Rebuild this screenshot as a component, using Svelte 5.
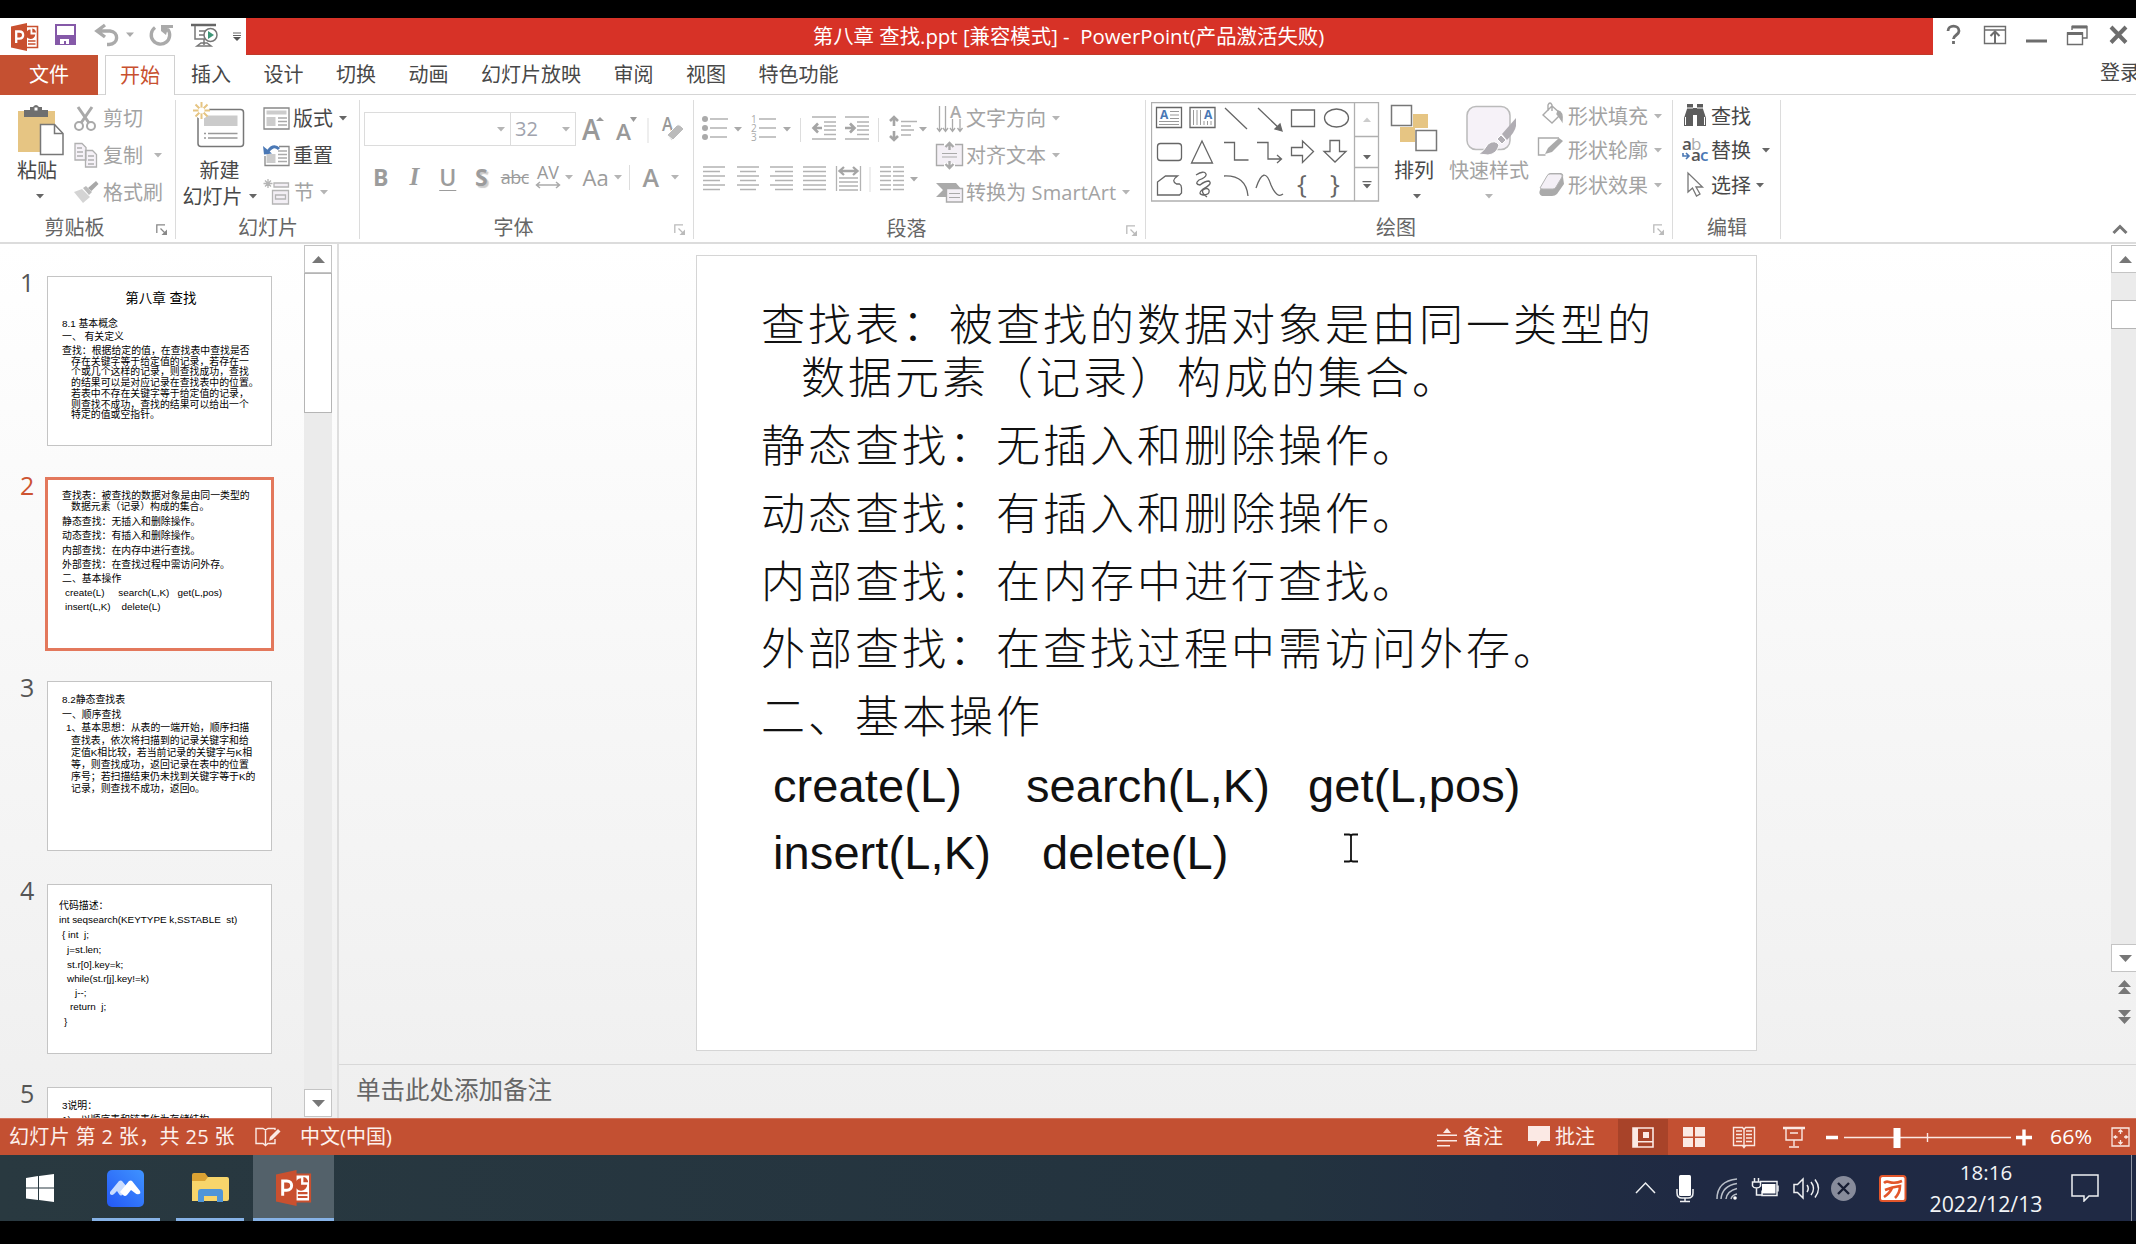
<script>
  const tabs = ['插入', '设计', '切换', '动画', '幻灯片放映', '审阅', '视图', '特色功能'];

  // Each line: [text, left offset, vertical centre] measured inside its slide.
  const slideLines = [
    ['查找表：被查找的数据对象是由同一类型的', 64, 66],
    ['数据元素（记录）构成的集合。', 104, 119],
    ['静态查找：无插入和删除操作。', 64, 187],
    ['动态查找：有插入和删除操作。', 64, 255],
    ['内部查找：在内存中进行查找。', 64, 323],
    ['外部查找：在查找过程中需访问外存。', 64, 390],
    ['二、基本操作', 64, 458],
  ];
  const slideCalls = [
    [['create(L)', 76], ['search(L,K)', 329], ['get(L,pos)', 611]],
    [['insert(L,K)', 76], ['delete(L)', 345]],
  ];

  const thumbs = [
    {
      n: 1,
      title: '第八章 查找',
      lines: [
        ['8.1 基本概念', 14, 46],
        ['一、 有关定义', 14, 59],
        ['查找：根据给定的值，在查找表中查找是否', 14, 73],
        ['存在关键字等于给定值的记录，若存在一', 23, 84],
        ['个或几个这样的记录，则查找成功，查找', 23, 94],
        ['的结果可以是对应记录在查找表中的位置。', 23, 104.5],
        ['若表中不存在关键字等于给定值的记录，', 23, 115.5],
        ['则查找不成功，查找的结果可以给出一个', 23, 126.5],
        ['特定的值或空指针。', 23, 137],
      ],
    },
    {
      n: 2,
      selected: true,
      lines: [
        ['查找表：被查找的数据对象是由同一类型的', 14, 15],
        ['数据元素（记录）构成的集合。', 23, 26.5],
        ['静态查找：无插入和删除操作。', 14, 41],
        ['动态查找：有插入和删除操作。', 14, 55.5],
        ['内部查找：在内存中进行查找。', 14, 70],
        ['外部查找：在查找过程中需访问外存。', 14, 84.5],
        ['二、基本操作', 14, 98],
        ['create(L)     search(L,K)   get(L,pos)', 17, 112],
        ['insert(L,K)    delete(L)', 17, 126.5],
      ],
    },
    {
      n: 3,
      lines: [
        ['8.2静态查找表', 14, 17],
        ['一、顺序查找', 14, 31.5],
        ['1、基本思想：从表的一端开始，顺序扫描', 18, 45],
        ['查找表，依次将扫描到的记录关键字和给', 23, 57.5],
        ['定值K相比较，若当前记录的关键字与K相', 23, 70],
        ['等，则查找成功，返回记录在表中的位置', 23, 82],
        ['序号；若扫描结束仍未找到关键字等于K的', 23, 94],
        ['记录，则查找不成功，返回0。', 23, 106],
      ],
    },
    {
      n: 4,
      lines: [
        ['代码描述：', 11, 20],
        ['int seqsearch(KEYTYPE k,SSTABLE  st)', 11, 33.5],
        ['{ int  j;', 14, 48.5],
        ['j=st.len;', 19, 64],
        ['st.r[0].key=k;', 19, 79],
        ['while(st.r[j].key!=k)', 19, 93],
        ['j--;', 27, 107],
        ['return  j;', 22, 121],
        ['}', 16, 135.5],
      ],
    },
    { n: 5, lines: [['3说明：', 14, 17], ['1)、以顺序表和链表作为存储结构', 14, 31]] },
  ];

  const gap = (lines, i, h) => lines[i][2] - (i ? lines[i - 1][2] + h / 2 : 0) - h / 2;
</script>

{#snippet caret(dim = false)}
  <svg class="caret" class:dim width="8" height="5" viewBox="0 0 8 5"><path d="M0 0h8L4 4.6z" /></svg>
{/snippet}

{#snippet launcher(dim = false)}
  <svg class="launcher" class:dim width="12" height="12" viewBox="0 0 12 12">
    <path d="M.8 9V.8H9M4.5 4.5 9 9" fill="none" stroke="currentColor" stroke-width="1.3" />
    <path d="M11 5.5V11H5.5z" fill="currentColor" />
  </svg>
{/snippet}

{#snippet pptLogo(w, h)}
  <svg width={w} height={h} viewBox="0 0 28 28">
    <path d="M14 3.5h12.500v21H14z" fill="#fff" stroke="#c9502f" stroke-width="1.6" />
    <path d="M19.500 6.500v5h4.800a4.800 4.800 0 1 1-4.800-5z" fill="#c9502f" />
    <path d="M21.300 5.500a4.500 4.500 0 0 1 3.700 4h-3.700z" fill="#c9502f" />
    <path d="M17 18h7.500M17 21h7.500" stroke="#c9502f" stroke-width="1.6" />
    <path d="M0 3.500 16 0v28L0 24.500z" fill="#c9502f" />
    <path d="M5.200 20V8.500h3.200c5 0 5 7.200 0 7.200H5.200" fill="none" stroke="#fff" stroke-width="2.300" />
  </svg>
{/snippet}

<div class="screen">
  <header class="titlebar">
    <div class="quick">
      <span class="q1">{@render pptLogo(28, 28)}</span>
      <svg width="182" height="37" viewBox="50 18 182 37" fill="none">
        <path d="M56 25h19v19H56z" stroke="#8559a8" stroke-width="2" />
        <path d="M56 35h19v9H56z" fill="#8559a8" /><path d="M60 39h9v5h-3v-3h-2v3h-4z" fill="#fff" />
        <path d="M97 31h13c9 1 9 13-1 13.500h-2M105 25l-8 6 8 6" stroke="#aaa" stroke-width="3.4" />
        <path d="M126 32.500h8l-4 4.500z" fill="#aaa" />
        <path d="M155 27.500a9.200 9.200 0 1 0 12.500 1.500" stroke="#aaa" stroke-width="3.400" /><path d="M161 25h12v3h-5l-2 7-5-4z" fill="#aaa" />
        <path d="M191 25h25" stroke="#666" stroke-width="2.500" /><path d="M195 26v13h10M199 31h8M199 35h5M204 39v6M197 46l4-3h6l4 3z" stroke="#777" stroke-width="1.500" />
        <circle cx="210.500" cy="35" r="6.500" fill="#fff" stroke="#777" stroke-width="1.500" /><path d="M208 31v8l6-4z" fill="#3f9677" />
      </svg>
      <svg width="10" height="10" viewBox="0 0 10 10"><path d="M1 1h8M1 3.500h8" stroke="#666" stroke-width="1" /><path d="M1 5h8L5 9z" fill="#555" /></svg>
    </div>
    <div class="title">第八章 查找.ppt [兼容模式] -&nbsp; PowerPoint(产品激活失败)</div>
    <div class="winctl">
      <svg width="203" height="37" viewBox="1933 18 203 37" fill="none" stroke="#6d6d6d" stroke-width="1.400">
        <path d="M1948 31c0-6.500 11-6.500 11 0 0 4-5.500 4-5.500 8M1953.500 41v3" stroke-width="2.800" />
        <path d="M1984.500 26.500h21v17h-21zM1984.500 30h21" /><path d="M1995 43V32M1990.500 36l4.500-4.500 4.500 4.500" stroke-width="2" />
        <path d="M2026 41h21" stroke-width="3" />
        <path d="M2072 30v-3.500h15V38h-4" /><path d="M2072 27h15" stroke-width="3" /><path d="M2067.500 33h15v11.500h-15z" /><path d="M2067 33.500h16" stroke-width="3" />
        <path d="m2111 27 15 15.500M2126 27l-15 15.500" stroke-width="4" />
      </svg>
    </div>
  </header>

  <nav class="tabs">
    <div class="file">文件</div>
    <div class="tab active">开始</div>
    <div class="others">
      {#each tabs as t}<span>{t}</span>{/each}
    </div>
    <span class="login">登录</span>
  </nav>

  <section class="ribbon">
    <div class="group clip">
      <div class="body">
        <div class="big">
          <svg width="74" height="63" viewBox="0 95 74 63">
            <path d="M18 111h37v41H18z" fill="#e6c583" /><path d="M24 110h6v-3h3q3-4 6 0h3v3h6v7H24z" fill="#6f6f6f" /><path d="M34.500 107.500h3v3h-3z" fill="#fff" />
            <path d="M40.500 124.500h14l8.500 9v21H40.500z" fill="#fff" stroke="#777" stroke-width="1.500" /><path d="M54.500 124.500v9H63" fill="none" stroke="#777" stroke-width="1.500" />
          </svg>
          <span>粘贴</span>
          <span class="drop">{@render caret()}</span>
        </div>
        <div class="rows">
          <div class="row dim">
            <svg width="29" height="36" viewBox="74 100 29 36" fill="none" stroke="#a9a9a9" stroke-width="2"><circle cx="79" cy="125" r="4" /><circle cx="91" cy="125" r="4" /><path d="m78 106 11 16M92 106l-11 16" stroke-width="3" /></svg>
            剪切
          </div>
          <div class="row dim">
            <svg width="29" height="36" viewBox="74 137 29 36" fill="#f6f2f8" stroke="#b0b0b0" stroke-width="1.300"><path d="M75 142.500h7l4 4V159H75zM85.500 149.500h7l4 4V166h-11z" /><path d="M77 147h5M77 151h6M77 155h6M88 155h6M88 159h6M88 163h6" /></svg>
            复制<span class="c1">{@render caret(true)}</span>
          </div>
          <div class="row dim">
            <svg width="29" height="36" viewBox="74 174 29 36"><path d="m74 191 8-3 8 8-7 6z" fill="#d4d4d4" /><path d="m83 187 3-2 6 6-3 3z" fill="#bbb" /><path d="m88 187 8-7 2.500 3-7 7z" fill="#a8a8a8" /></svg>
            格式刷
          </div>
        </div>
      </div>
      <footer class="wide"><span class="label">剪贴板</span>{@render launcher()}</footer>
    </div>

    <div class="group slides">
      <div class="body">
        <div class="big">
          <svg width="80" height="63" viewBox="176 95 80 63" fill="none">
            <rect x="198" y="109.500" width="45.500" height="37" rx="3" stroke="#777" stroke-width="1.500" fill="#fff" /><path d="M204 115.500h33.500v10.500H204z" fill="#cbcbcb" />
            <path d="M208 133.500h29.500M208 138h29.500M204 133.500h2M204 138h2" stroke="#999" stroke-width="1.300" />
            <circle cx="201.500" cy="110.500" r="8" fill="#fff" /><path d="M201.500 102v17M193 110.500h17M195.500 104.500l12 12M207.500 104.500l-12 12" stroke="#e6c583" stroke-width="2" /><circle cx="201.500" cy="110.500" r="3" fill="#fff" />
          </svg>
          <span>新建</span>
          <span class="two">幻灯片{@render caret()}</span>
        </div>
        <div class="rows">
          <div class="row">
            <svg width="30" height="36" viewBox="263 100 30 36" fill="none" stroke="#888" stroke-width="1.300"><path d="M264 107h25v21h-25z" /><path d="M266.500 109.500h20v4h-20zM266.500 116h9v9h-9z" fill="#ccc" stroke="none" /><path d="M278 117h9M278 120.500h9M278 124h9" stroke="#aaa" /></svg>
            版式<span class="c2">{@render caret()}</span>
          </div>
          <div class="row">
            <svg width="30" height="36" viewBox="263 137 30 36" fill="none" stroke="#888" stroke-width="1.300"><path d="M279 145.500h10v19h-24V155" /><path d="M266.500 153h9v9h-9z" fill="#ccc" stroke="none" /><path d="M278 150h9M278 153.500h9M278 157h9M278 160.500h9" stroke="#aaa" /><path d="M279 148q-6-6-12 4" stroke="#4a78b5" stroke-width="3" /><path d="m263 145 1 8.500 8-1z" fill="#4a78b5" stroke="none" /></svg>
            重置
          </div>
          <div class="row dim">
            <svg width="31" height="36" viewBox="263 174 31 36" fill="#f3eff5" stroke="#b5b5b5" stroke-width="1.300"><path d="M268 178v9M263.500 182.500h9M265 179.500l6 6M271 179.500l-6 6" /><path d="M274 182h14.500v4H274zM272.500 189.500h16V203h-16zM275.500 194h10v4h-10z" /></svg>
            节<span class="c2">{@render caret(true)}</span>
          </div>
        </div>
      </div>
      <footer><span class="label">幻灯片</span></footer>
    </div>

    <div class="group font">
      <div class="body col">
        <div class="frow">
          <div class="box b1">{@render caret(true)}</div>
          <div class="box b2"><span>32</span>{@render caret(true)}</div>
          <svg width="112" height="36" viewBox="576 111 112 36" fill="#999">
            <text x="582" y="140" font-size="28" font-weight="600" textLength="18" lengthAdjust="spacingAndGlyphs">A</text><path d="m596 121 4-4 4 4z" />
            <text x="616" y="140" font-size="22" font-weight="600" textLength="15" lengthAdjust="spacingAndGlyphs">A</text><path d="m630 117 7 0-3.500 5z" />
            <path d="M647.500 118h1v25h-1z" fill="#ddd" />
            <text x="662" y="131" font-size="19" font-weight="600" textLength="11" lengthAdjust="spacingAndGlyphs">A</text><path d="m667 135 10-10q2-1 4 1l3 3-12 12z" fill="#bbb" stroke="#fff" /><path d="m668 136 5 4" stroke="#fff" />
          </svg>
        </div>
        <div class="frow fmt">
          <b>B</b><i>I</i><u>U</u><strong>S</strong><s>abc</s>
          <span class="av"><svg width="26" height="28" viewBox="536 165 26 28"><text x="538" y="181" font-size="19" fill="#999" textLength="22" lengthAdjust="spacingAndGlyphs">AV</text><path d="M538 187h22M541 184l-3.500 3 3.500 3M557 184l3.500 3-3.500 3" fill="none" stroke="#aaa" stroke-width="1.500" /></svg>{@render caret(true)}</span>
          <span class="aa">Aa{@render caret(true)}</span>
          <span class="sep"></span>
          <span class="fa">A{@render caret(true)}</span>
        </div>
      </div>
      <footer class="wide"><span class="label">字体</span>{@render launcher(true)}</footer>
    </div>

    <div class="group para">
      <div class="body">
        <svg width="241" height="120" viewBox="694 95 241 120" fill="none" stroke="#b3b3b3" stroke-width="1.700">
          <g fill="#aaa" stroke="none"><circle cx="705" cy="119" r="3" /><circle cx="705" cy="128" r="3" /><circle cx="705" cy="137" r="3" />
            <path d="M734 127h8l-4 4.600zM783 127h8l-4 4.600zM919 127h8l-4 4.600zM910 177h8l-4 4.600z" />
            <text x="751" y="123" font-size="10">1</text><text x="751" y="132" font-size="10">2</text><text x="751" y="141" font-size="10">3</text></g>
          <path d="M710 119h18M710 128h17M710 137h17M759 119h17M759 128h17M759 137h17" />
          <path d="M800.500 118v24M878.500 118v24M870 167v25" stroke="#ddd" stroke-width="1" />
          <path d="M812 117h24M824 122h12M824 126h12M824 130h12M824 134.500h12M812 139h24M845 117h24M857 122h12M857 126h12M857 130h12M857 134.500h12M845 139h24" stroke-width="1.400" />
          <path d="M813 128h9M818 123.500l-4.500 4.500 4.500 4.500M845 128h9M850 123.500l4.500 4.500-4.500 4.500M894 118v8M890 121l4-4 4 4M894 131v8M890 136l4 4 4-4" stroke="#a5a5a5" stroke-width="2.600" />
          <path d="M901 121.500h16M901 126h10M901 130h13M901 135h10" />
          <path d="M703 167h22M703 171.500h17M703 176h22M703 180.500h17M703 185h22M703 189.500h17M737 167h22M740 171.500h16M737 176h22M740 180.500h16M737 185h22M740 189.500h16M770 167h23M775 171.500h18M770 176h23M775 180.500h18M770 185h23M775 189.500h18M803 167h23M803 171.500h23M803 176h23M803 180.500h23M803 185h23M803 189.500h23" stroke-width="1.300" />
          <path d="M836.500 166v25M860.500 166v25M839 178h19M839 182h19M839 186h19M839 190h19" stroke-width="1.300" /><path d="M840 171h17M844 167l-4.500 4 4.500 4M853 167l4.500 4-4.500 4" stroke="#a5a5a5" stroke-width="2.300" />
          <path d="M880 167h11M880 171.500h11M880 176h11M880 180.500h11M880 185h11M880 189.500h11M893 167h11M893 171.500h11M893 176h11M893 180.500h11M893 185h11M893 189.500h11" stroke-width="1.300" />
        </svg>
        <div class="rows">
          <div class="row dim">
            <svg width="31" height="36" viewBox="935 100 31 36" fill="none" stroke="#aaa" stroke-width="1.300"><path d="M939.500 105v25M945.500 105v25M952.500 118v12M960 118v12M937 127l2.500 3.500 2.500-3.500M943 127l2.500 3.500 2.500-3.500M950 127l2.500 3.500 2.500-3.500M957.500 127l2.500 3.500 2.500-3.500" /><text x="950" y="117" font-size="17" font-weight="600" fill="#aaa" stroke="none">A</text></svg>
            文字方向<span class="c3">{@render caret(true)}</span>
          </div>
          <div class="row dim">
            <svg width="31" height="36" viewBox="935 137 31 36" fill="none" stroke="#aaa" stroke-width="1.400"><path d="M936.500 143.500h26v21h-26z" fill="#f4f0f6" /><path d="M944 141h11v4h-11zM944 162h11v4h-11z" fill="#fff" stroke="none" /><path d="M942 152.500h15M942 156h15" stroke-width="1" /><path d="M949.500 142v7M945.500 146l4-4 4 4M949.500 160v7M945.500 163l4 4 4-4" stroke-width="2.400" /></svg>
            对齐文本<span class="c3">{@render caret(true)}</span>
          </div>
          <div class="row dim">
            <svg width="31" height="36" viewBox="935 174 31 36"><path d="M936 182h20l6 7-6 7h-20l7-7z" fill="#aaa" /><path d="M946.500 187.500h16V201h-16z" fill="#f4f0f6" stroke="#aaa" stroke-width="1.400" /><path d="M949 192.500h11M949 196.500h11" stroke="#aaa" stroke-width="1.200" /></svg>
            <span class="smart">转换为 SmartArt</span><span class="c3">{@render caret(true)}</span>
          </div>
        </div>
      </div>
      <footer class="wide"><span class="label">段落</span>{@render launcher(true)}</footer>
    </div>

    <div class="group draw">
      <div class="body">
        <svg class="gallery" width="229" height="100" viewBox="1151 102 229 100" fill="none" stroke="#666" stroke-width="1.300">
          <path d="M1151.500 102.500h227v98.500h-227zM1354.500 102.500V201M1354.500 136.500h24M1354.500 167.500h24" stroke="#b0b0b0" />
          <path d="M1156.500 107.500h25v20h-25zM1190 107.500h25v20h-25z" />
          <path d="M1170 111.500h9M1170 115h9M1170 118.500h9M1159 121.500h20M1159 124.500h20M1193.500 110v15M1197 110v15M1200.500 110v15M1204 121v4M1207.500 121v4M1211 121v4" stroke="#999" stroke-width="1" />
          <g fill="#4a78b5" stroke="none" font-weight="700" font-size="12"><text x="1160" y="119">A</text><text x="1204" y="119">A</text></g>
          <path d="m1225 108 22 21M1258 108l23 22" /><path d="m1282 131-7-2 5-5z" fill="#666" />
          <path d="M1291.500 110h23v16.500h-23z" /><ellipse cx="1336.500" cy="118" rx="12" ry="9" />
          <rect x="1157.500" y="143.500" width="24" height="17" rx="3" /><path d="M1202 141l10.500 22h-21zM1224 142.500h10.500V160h14M1257 142.500h11V159h13M1277 155l4.500 4-4.500 4M1291.500 147.500h11v-6.500l11 10.500-11 11v-7h-11zM1330 140.500h9.500v11h6.500l-11 10.500-11-10.500h6z" />
          <path d="M1157.500 182l8-6h12q-7 5-1 8h3q2 1 2 4v5l-2 2h-22zM1196 175q8-5 10-1 1 3-7 6-5 4 1 5 5-4 9-4 4 3-6 8-6 5 0 6 7 0 6-5-2-3-6 0-2 3 4 7M1224 176q22-1 24 20M1256 188q8-24 15-3 6 14 12 9" />
          <g fill="#666" stroke="none" font-size="26"><text x="1297" y="193">{'{'}</text><text x="1330" y="193">{'}'}</text><path d="M1363 155h8l-4 4.600zM1363 184h8l-4 4.600zM1362.500 181h9v1.300h-9z" /><path d="M1363 122h8l-4-4.600z" fill="#ccc" /></g>
        </svg>
        <div class="big arrange">
          <svg width="60" height="63" viewBox="1384 95 60 63" stroke="#777" stroke-width="1.500" fill="#fff"><path d="M1413 114h15v14h-15zM1400 127h15v15h-15z" fill="#e6c583" stroke="none" /><path d="M1391.500 105.500h20v20h-20zM1416 130.500h20.500v20H1416z" /></svg>
          <span>排列</span>
          <span class="drop">{@render caret()}</span>
        </div>
        <div class="big quickstyle dim">
          <svg width="84" height="63" viewBox="1447 95 84 63"><rect x="1467" y="106.500" width="43" height="43" rx="9" fill="#f6f2f8" stroke="#bbb" stroke-width="1.500" /><path d="m1516 118-14 16 5 6q8-8 9-14z" fill="#b0adb3" /><path d="m1501 135 5 5-4 4-5-5z" fill="#b0adb3" stroke="#fff" /><path d="M1479 154q5-3 9-10 7-5 11 1-2 9-11 10z" fill="#b0adb3" stroke="#fff" /></svg>
          <span>快速样式</span>
          <span class="drop">{@render caret(true)}</span>
        </div>
        <div class="rows tight">
          <div class="row dim">
            <svg width="32" height="34" viewBox="1534 99 32 34" fill="none" stroke="#aaa" stroke-width="1.400"><path d="m1541 115 9-9 9 8-9 9zM1546 111v-6q2-4 4 0v6" /><path d="M1556 111q5 1 4 10-3-5-5-7z" fill="#aaa" /></svg>
            形状填充<span class="c3">{@render caret(true)}</span>
          </div>
          <div class="row dim">
            <svg width="32" height="34" viewBox="1534 134 32 34"><path d="M1557 138h-20.500v17h7" fill="none" stroke="#aaa" stroke-width="1.400" /><path d="m1543 154 3-6 11-10 4 3-11 11z" fill="#aaa" /></svg>
            形状轮廓<span class="c3">{@render caret(true)}</span>
          </div>
          <div class="row dim">
            <svg width="32" height="34" viewBox="1534 168 32 34"><path d="m1538 190 7-14q1-3 4-3h10q3 1 2 4l1 7-7 10q-2 2-5 2h-10q-4-2-2-6z" fill="#aaa" /><path d="m1538 188 7-12q1-2 3-2h10q3 0 2 3l-6 10q-1 2-3 2h-10q-3 0-3-1z" fill="#f4f0f6" stroke="#b5b5b5" /></svg>
            形状效果<span class="c3">{@render caret(true)}</span>
          </div>
        </div>
      </div>
      <footer class="wide"><span class="label">绘图</span>{@render launcher(true)}</footer>
    </div>

    <div class="group edit">
      <div class="body">
        <div class="rows tight">
          <div class="row">
            <svg width="31" height="34" viewBox="1680 99 31 34" fill="#5d5d5d"><path d="M1687 104h6v4h4v-4h6v5l3 9v8h-9v-11h-4v11h-9v-8l3-9z" /><path d="M1685.500 117v8M1704.500 117v8M1687 108h6M1697 108h6" stroke="#fff" stroke-width="1" /></svg>
            查找
          </div>
          <div class="row">
            <svg width="31" height="34" viewBox="1680 134 31 34" font-size="17" font-weight="600"><text x="1682" y="150" fill="#555">a</text><text x="1691" y="150" fill="#aaa" font-weight="400">b</text><text x="1691" y="161" fill="#555">a</text><text x="1700" y="161" fill="#4a78b5">c</text><path d="M1683 153v3h6M1686 153l3 3-3 3" fill="none" stroke="#4a78b5" stroke-width="1.600" /></svg>
            替换<span class="c4">{@render caret()}</span>
          </div>
          <div class="row">
            <svg width="31" height="34" viewBox="1680 168 31 34"><path d="M1688 173v19l4.500-4 4 8 3.500-2-4-7h6.500z" fill="#fff" stroke="#777" stroke-width="1.300" /></svg>
            选择<span class="c5">{@render caret()}</span>
          </div>
        </div>
      </div>
      <footer><span class="label">编辑</span></footer>
    </div>
    <svg class="collapse" width="16" height="11" viewBox="0 0 16 11"><path d="m1.500 9 6.500-6.500L14.500 9" fill="none" stroke="#777" stroke-width="3" /></svg>
  </section>

  <main>
    <aside>
      {#each thumbs as th}
        <div class="item">
          <span class="num" class:on={th.selected}>{th.n}</span>
          <div class="thumb" class:selected={th.selected}>
            {#if th.title}<h2>{th.title}</h2>{/if}
            <div class="tlines">
              {#each th.lines as l, i}
                <p style:margin-top="{gap(th.lines, i, 10)}px" style:padding-left="{l[1]}px">{l[0]}</p>
              {/each}
            </div>
          </div>
        </div>
      {/each}
    </aside>
    <div class="scroll left">
      <div class="btn"><svg width="13" height="7" viewBox="0 0 13 7"><path d="M0 7h13L6.500 0z" /></svg></div>
      <div class="knob"></div>
      <div class="fill"></div>
      <div class="btn"><svg width="13" height="7" viewBox="0 0 13 7"><path d="M0 0h13L6.500 7z" /></svg></div>
    </div>
    <div class="editor">
      <div class="canvas">
        <article class="slide">
          {#each slideLines as l, i}
            <p style:margin-top="{gap(slideLines, i, 50)}px" style:padding-left="{l[1]}px">{l[0]}</p>
          {/each}
          {#each slideCalls as row}
            <div class="calls">
              {#each row as [text, x], i}
                <span style:width="{(row[i + 1]?.[1] ?? 1000) - x}px">{text}</span>
              {/each}
            </div>
          {/each}
          <svg class="ibeam" width="18" height="30" viewBox="0 0 18 30"><path d="M2 1.500h5q2 0 2 2 0-2 2-2h5M9 3v24M2 28.500h5q2 0 2-2 0 2 2 2h5" fill="none" stroke="#111" stroke-width="1.800" /></svg>
        </article>
        <div class="scroll right">
          <div class="btn"><svg width="13" height="7" viewBox="0 0 13 7"><path d="M0 7h13L6.500 0z" /></svg></div>
          <div class="fill f1"></div>
          <div class="knob"></div>
          <div class="fill"></div>
          <div class="btn"><svg width="13" height="7" viewBox="0 0 13 7"><path d="M0 0h13L6.500 7z" /></svg></div>
          <svg class="pg" width="13" height="14" viewBox="0 0 13 14"><path d="M0 7h13L6.500 0zM0 14h13L6.500 7z" /></svg>
          <svg class="pg" width="13" height="14" viewBox="0 0 13 14"><path d="M0 0h13L6.500 7zM0 7h13L6.500 14z" /></svg>
        </div>
      </div>
      <div class="notes">单击此处添加备注</div>
    </div>
  </main>

  <div class="status">
    <span class="count">幻灯片 第 2 张，共 25 张</span>
    <svg class="book" width="27" height="20" viewBox="0 0 27 20" fill="none" stroke="#fbe9e4" stroke-width="1.400"><path d="M20 3v-1.500h-7L10.500 3 8 1.500H1v15h7l2.500 2 2.500-2h7V12M10.500 3v15" /><path d="m14 14 1-4 8-8 2.500 2.500-8 8z" fill="#fbe9e4" stroke="none" /></svg>
    <span>中文(中国)</span>
    <div class="sright">
      <svg width="20" height="22" viewBox="0 0 20 22"><path d="M6 7h8l-4-5zM0 8.500h20v1.500H0zM0 14h20v1.500H0zM0 19h13v1.500H0z" /></svg>
      <span class="st1">备注</span>
      <svg width="22" height="22" viewBox="0 0 22 22"><path d="M0 0h22v15h-9l-4 6v-6H0z" /></svg>
      <span class="st2">批注</span>
      <div class="view"><svg width="22" height="21" viewBox="0 0 22 21"><path d="M1 1h20v19H1z" fill="none" stroke="#fbe9e4" stroke-width="1.600" /><path d="M1 1h5v19H1zM6 14h15v1.500H6zM11 5h6v6h-6z" /></svg></div>
      <svg width="449" height="37" viewBox="1668 1118 449 37" fill="none" stroke="#fbe9e4" stroke-width="1.400">
        <path d="M1683 1126h10v9.500h-10zM1695 1126h10v9.500h-10zM1683 1137h10v9h-10zM1695 1137h10v9h-10z" fill="#fbe9e4" stroke="none" />
        <path d="M1733.500 1126.500h9l1.500 2 1.500-2h9v18h-9l-1.500 2-1.500-2h-9zM1744 1128v18M1736 1130h6M1736 1133.500h6M1736 1137h6M1736 1140.500h6M1746 1130h6M1746 1133.500h6M1746 1137h6M1746 1140.500h6" />
        <path d="M1783 1127h22" stroke-width="2.500" /><path d="M1786 1127v12h16v-12M1790 1132h8M1794 1139v6M1789 1146h10" />
        <path d="M1826 1136.500h12M2016 1136.500h16M2024 1128.500v16" stroke="#fff" stroke-width="3.400" /><path d="M1844 1136.500h167M1927.500 1132v9" />
        <path d="M1893.500 1127h7v20h-7z" fill="#fff" stroke="none" />
        <text x="2050" y="1142.500" font-size="20" fill="#fff" stroke="none" textLength="42" lengthAdjust="spacingAndGlyphs">66%</text>
      </svg>
      <svg width="19" height="20" viewBox="0 0 19 20" fill="none" stroke="#fbe9e4" stroke-width="1.300"><path d="M1 1h17v18H1zM9.500 3v4M7.500 5l2-2 2 2M9.500 17v-4M7.500 15l2 2 2-2M3 10h3.500M13 10h3.500M5 8.500 3 10l2 1.500M14.500 8.500l2 1.500-2 1.500" /></svg>
    </div>
  </div>

  <div class="taskbar">
    <div class="app start"><svg width="28" height="28" viewBox="0 0 28 28" fill="#fff"><path d="M0 4l12-2v11.500H0zM13 1.900 28 0v13.500H13zM0 14.500h12V26L0 24.500zM13 14.500h15V28l-15-1.900z" /></svg></div>
    <div class="app run meet">
      <svg width="37" height="37" viewBox="0 0 37 37"><defs><linearGradient id="mt" x1="0" y1="1" x2="1" y2="0"><stop offset="0" stop-color="#2458f5" /><stop offset="1" stop-color="#3f93ff" /></linearGradient></defs><rect width="37" height="37" rx="5" fill="url(#mt)" /><path d="M3 22 12 11q2-1 3 0l5 6-4 7q-2 3-4 0l-2-3-3 3q-2 2-4 0z" fill="#c9dcff" /><path d="m13 22 9-11q2-1 3 0l8 10q1 3-1 3-2 1-4-1l-4-3-4 5q-2 2-4 0z" fill="#fff" /></svg>
    </div>
    <div class="app run">
      <svg width="38" height="31" viewBox="0 0 38 31"><path d="M1 2q0-2 2-2h11l3 4v6H1z" fill="#dba233" /><path d="M1 8h13l3-4h19q2 0 2 2v20q0 2-2 2H1z" fill="#f7d56b" /><path d="M7 29V19q0-3 3-3h19q3 0 3 3v10h-6v-6H13v6z" fill="#4f95d8" /></svg>
    </div>
    <div class="app run ppt">{@render pptLogo(36, 36)}</div>
    <div class="tray">
      <svg width="285" height="66" viewBox="1630 1155 285 66" fill="none" stroke="#eef0f2" stroke-width="1.500">
        <path d="m1636 1193 9.500-10 9.500 10" />
        <rect x="1679" y="1175" width="12" height="21" rx="1.500" fill="#fff" stroke="none" /><path d="M1677 1189v4q0 5 5 5h6q5 0 5-5v-4M1685 1198v3M1680 1201.500h10" />
        <g stroke="#b9bfc9"><path d="M1717 1199q0-18 20-20M1721 1199q1-13 16-15.500M1726 1199q1-8 11-10.500M1731 1199q1-4 6-5" /></g><circle cx="1735" cy="1198" r="1.800" fill="#fff" stroke="none" />
        <path d="M1760 1181.500h17v14h-15v-5" /><path d="M1762 1184h13.500v9.500H1762z" fill="#fff" stroke="none" /><path d="M1778 1185.500v6M1754.500 1178v4M1758.500 1178v4M1752.500 1182h8v4q-1 2-4 2t-4-2zM1756.500 1188v7h6" />
        <path d="M1794 1184.500h3.500l5.500-5.500v19l-5.500-5.500h-3.500zM1807 1185q2.500 3.500 0 7M1811 1182q5 6.500 0 13M1815 1179.500q7 9 0 18" />
        <circle cx="1843.500" cy="1188.500" r="12.500" fill="#878b9b" stroke="none" /><path d="m1838 1183 11 11M1849 1183l-11 11" stroke="#161c33" stroke-width="2.400" />
        <rect x="1880" y="1176" width="25.500" height="25" rx="2.500" fill="#fff" stroke="#e2562b" stroke-width="2" /><path d="M1884 1183q2-2 5-1 6 2 13-1M1885 1190q7-3 15-4 0 7-5 12M1892 1188q-2 5-8 9" stroke="#e2562b" stroke-width="2.600" />
      </svg>
      <div class="clock"><span>18:16</span><span>2022/12/13</span></div>
      <svg width="28" height="28" viewBox="0 0 28 28" fill="none" stroke="#eef0f2" stroke-width="1.500"><path d="M1 1h26v21h-9l-5 5v-5H1z" /></svg>
      <span class="peek"></span>
    </div>
  </div>
</div>

<style>
  :global(body) { background: #000; }
  .screen {
    width: 2136px; height: 1244px; overflow: hidden; box-sizing: border-box; padding-top: 18px;
    background: #000; color: #484848; font: 20px/26px 'Open Sans', 'Noto Sans CJK SC', sans-serif;
    display: flex; flex-direction: column;
  }
  svg { display: block; flex: none; }
  .titlebar { height: 37px; display: flex; background: #fff; flex: none; }
  .quick { width: 246px; display: flex; align-items: center; }
  .q1 { margin: 0 11px 0 11px; }
  .title {
    width: 1687px; padding-right: 42px; background: #d73227; color: #fff; text-align: center; font-size: 20.400px; line-height: 37px;
    white-space: pre; border-bottom: 1px solid #c03a2a; box-sizing: border-box;
  }
  .winctl { width: 203px; }

  .tabs { height: 40px; flex: none; display: flex; background: #fff; border-bottom: 1px solid #d5d5d5; box-sizing: border-box; line-height: 40px; }
  .file { width: 98px; height: 40px; background: #c55031; color: #fff; text-align: center; }
  .tab.active { width: 70px; height: 40px; box-sizing: border-box; margin-left: 7px; border: 1px solid #d0d0d0; border-bottom: 0; text-align: center; color: #c8502f; line-height: 39px; background: #fff; }
  .others { margin-left: 16px; display: flex; gap: 32.500px; }
  .login { margin-left: auto; width: 36px; overflow: hidden; white-space: nowrap; line-height: 35px; }

  .ribbon { height: 149px; flex: none; display: flex; background: #fff; border-bottom: 2px solid #dcdcdc; box-sizing: border-box; }
  .group { display: flex; flex-direction: column; position: relative; }
  .group::after { content: ''; position: absolute; right: 0; top: 5px; width: 1px; height: 139px; background: #dcdcdc; }
  .clip { width: 176px; } .slides { width: 184px; } .font { width: 334px; } .para { width: 452px; } .draw { width: 527px; } .edit { width: 108px; }
  .body { height: 120px; display: flex; }
  .body.col { flex-direction: column; padding: 16px 0 0 4px; height: 104px; gap: 12px; }
  footer { height: 28px; display: flex; align-items: center; justify-content: center; position: relative; color: #666; }
  footer.wide { padding-right: 27px; }
  .label { line-height: 28px; position: relative; }
  .launcher { position: absolute; right: 8px; top: 10px; color: #888; }
  .launcher.dim { color: #bbb; }
  .caret { fill: #666; }
  .caret.dim, .dim .caret { fill: #b5b5b5; }
  .big { display: flex; flex-direction: column; align-items: center; white-space: nowrap; }
  .big .drop { padding-top: 10px; }
  .clip .big .drop { padding-left: 5px; }
  .big .two { display: flex; align-items: center; gap: 6px; line-height: 25px; }
  .clip .big { width: 74px; }
  .slides .big { width: 87px; }
  .slides .big svg:first-child { align-self: flex-start; }
  .slides .big .two .caret { align-self: center; }
  .rows { padding-top: 5px; display: flex; flex-direction: column; }
  .row { height: 37px; display: flex; align-items: center; white-space: nowrap; line-height: 35px; }
  .tight { padding-top: 4px; }
  .tight .row { height: 34.500px; }
  .smart { letter-spacing: .1px; }
  .dim { color: #a3a3a3; }
  .c1 { margin-left: 11px; } .c2 { margin-left: 6px; } .c3 { margin-left: 6px; } .c4 { margin-left: 11px; } .c5 { margin-left: 5px; }

  .frow { display: flex; height: 36px; align-items: center; }
  .box { height: 34px; border: 1px solid #dcdcdc; box-sizing: border-box; display: flex; align-items: center; justify-content: flex-end; padding-right: 5px; }
  .b1 { width: 147px; } .b2 { width: 65px; border-left: 0; color: #a0a3ad; }
  .b2 span { margin: 0 auto 0 4px; }
  .fmt { color: #9c9c9c; font-size: 23px; height: 36px; }
  .fmt > b, .fmt > i, .fmt > u, .fmt > strong, .fmt > s { width: 33.500px; text-align: center; flex: none; }
  .fmt > i { font-family: 'Liberation Serif', serif; font-size: 25px; font-weight: 700; }
  .fmt > u { text-decoration-thickness: 1px; text-underline-offset: 4px; font-weight: 600; }
  .fmt > strong { text-shadow: 2px 2px 1px #ccc; }
  .fmt > s { font-size: 18px; letter-spacing: -.5px; }
  .av, .aa, .fa { display: flex; align-items: center; flex: none; }
  .av { margin-left: 3px; gap: 4px; width: 48px; }
  .aa { gap: 5px; font-size: 22px; width: 46px; }
  .fmt .sep { width: 1px; height: 25px; background: #ddd; margin-right: 13px; }
  .fa { gap: 12px; font-size: 25px; font-weight: 600; }

  .gallery { margin: 7px 4px 0 5px; }
  .arrange { width: 60px; } .quickstyle { width: 84px; margin-left: 3px; } .draw .rows { margin-left: 5px; }
  .arrange .drop { padding-left: 6px; }
  .edit .rows { margin-left: 7px; }
  .collapse { margin: 129px 0 0 331px; }

  main { height: 874px; flex: none; display: flex; background: linear-gradient(#fff, #efefef); overflow: hidden; }
  aside { width: 304px; height: 874px; overflow: hidden; box-sizing: border-box; padding-top: 32px; display: flex; flex-direction: column; gap: 32.700px; }
  .item { display: flex; flex: none; height: 170px; }
  .num { width: 47px; padding-left: 20px; box-sizing: border-box; font-size: 25px; line-height: 12px; color: #555; }
  .num.on { color: #cd5432; }
  .thumb { width: 225px; height: 170px; box-sizing: border-box; border: 1px solid #c4c4c4; background: #fff; overflow: hidden; color: #000; font: 9.900px/10px 'Liberation Sans', 'Noto Sans CJK SC', sans-serif; }
  .thumb.selected { border-color: #e3785c; outline: 2px solid #e3785c; }
  .thumb p { margin: 0; height: 10px; white-space: pre; }
  .tlines { padding-top: 1px; }
  .thumb h2 { margin: 0; height: 0; font-weight: 400; font-size: 13.500px; line-height: 44px; text-align: center; padding-left: 3px; }

  .scroll { display: flex; flex-direction: column; align-items: stretch; background: #ebebeb; box-sizing: border-box; }
  .scroll .btn { height: 28px; background: #fff; border: 1px solid #c4c4c4; box-sizing: border-box; display: flex; align-items: center; justify-content: center; flex: none; fill: #777; }
  .scroll .knob { background: #fff; border: 1px solid #b5b5b5; box-sizing: border-box; flex: none; }
  .scroll .fill { flex: 1; }
  .left { width: 28px; margin: 1px 0 1px; }
  .left .knob { height: 140px; }
  .editor { flex: 1; margin-left: 5px; border-left: 2px solid #dedede; display: flex; flex-direction: column; }
  .canvas { height: 820px; display: flex; justify-content: space-between; flex: none; }
  .slide { width: 1061px; height: 796px; box-sizing: border-box; margin: 11px 0 0 357px; border: 1px solid #d5d5d5; background: #fff; color: #111; position: relative; }
  .slide p { margin: 0; height: 50px; line-height: 50px; font-size: 44px; letter-spacing: 3px; font-weight: 300; font-family: 'Noto Sans CJK SC', sans-serif; white-space: pre; }
  .calls { display: flex; padding-left: 76px; height: 67px; line-height: 67px; font-family: 'Liberation Sans', sans-serif; font-size: 47px; letter-spacing: .1px; white-space: pre; }
  .calls span { flex: none; }
  .slide p + .calls { margin-top: 13px; }
  .ibeam { position: absolute; left: 645px; top: 577px; }
  .right { width: 25px; overflow: hidden; margin-top: 1px; background: none; }
  .right .btn, .right .knob { width: 28px; }
  .right .fill { background: #ebebeb; }
  .right .f1 { flex: none; height: 27px; }
  .right .knob { height: 29px; }
  .right .pg { margin: 8px 0 8px 7px; fill: #777; }
  .right .pg:last-child { margin: 8px 0 40px 7px; }
  .notes { height: 54px; border-top: 1px solid #d8d8d8; box-sizing: border-box; padding-left: 17px; font-size: 24.500px; line-height: 50px; color: #666; }

  .status { height: 37px; flex: none; background: #c35032; color: #fdf1ed; display: flex; align-items: center; line-height: 35px; border-top: 1px solid #d2745c; box-sizing: border-box; padding-left: 9px; }
  .status span { white-space: pre; height: 37px; }
  .count { width: 246px; letter-spacing: .35px; }
  .book { margin-right: 18px; }
  .sright { margin-left: auto; display: flex; align-items: center; width: 699px; fill: #fbe9e4; }
  .st1 { margin: 0 25px 0 6px; width: 40px; } .st2 { margin: 0 23px 0 5px; width: 40px; }
  .view { width: 50px; height: 36px; background: #a84329; display: flex; align-items: center; justify-content: center; }
  .sright > svg:last-child { margin-left: -6px; }

  .taskbar { height: 66px; flex: none; display: flex; background: linear-gradient(90deg, #293940 0, #23333f 60%, #1f2943 80%, #1f2944); }
  .app { display: flex; align-items: center; justify-content: center; height: 66px; box-sizing: border-box; }
  .start { width: 80px; margin-right: 12px; }
  .run { width: 68px; border-bottom: 3px solid #86b2e6; padding-top: 3px; margin-right: 16px; }
  .meet svg { margin-right: 1px; }
  .run.ppt { width: 81px; margin: 0 0 0 -7px; background: #53616a; }
  .tray { margin-left: auto; display: flex; align-items: center; color: #f2f4f6; }
  .clock { width: 142px; display: flex; flex-direction: column; align-items: center; line-height: 31px; font-size: 21.300px; margin-right: 14px; }
  .clock span:first-child { font-size: 20.500px; }
  .peek { width: 1px; height: 66px; background: #8b92a0; margin: 0 4px 0 32px; }
</style>
